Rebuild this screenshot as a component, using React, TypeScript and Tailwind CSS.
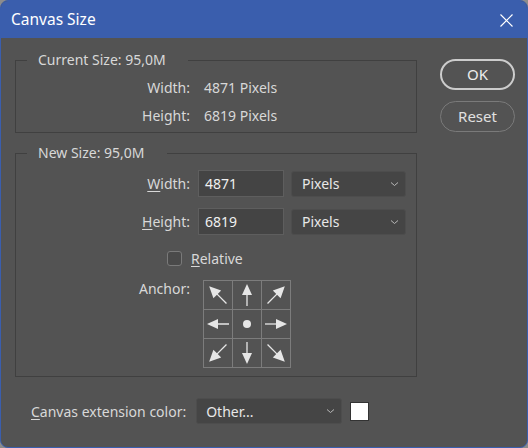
import React from "react";

const font = { fontFamily: '"Noto Sans", "Open Sans", sans-serif' };

function Chevron() {
  return (
    <svg width="9" height="6" viewBox="0 0 9 6" className="shrink-0">
      <path d="M1 1.5 L4.5 4.5 L8 1.5" fill="none" stroke="#b8b8b8" strokeWidth="1" />
    </svg>
  );
}

function Arrow({ rot }: { rot: number }) {
  const diag = rot % 90 !== 0;
  return (
    <svg width="28" height="28" viewBox="0 0 28 28">
      <g transform={`rotate(${rot} 14 14)`}>
        <line x1="14" y1={diag ? 26 : 25} x2="14" y2="11" stroke="#e6e6e6" strokeWidth="1.3" />
        <polygon points={diag ? "14,1.5 8.5,13 19.5,13" : "14,3 9,14 19,14"} fill="#e6e6e6" />
      </g>
    </svg>
  );
}

function Dot() {
  return (
    <svg width="28" height="28" viewBox="0 0 28 28">
      <circle cx="14" cy="14" r="4" fill="#e6e6e6" />
    </svg>
  );
}

export default function App() {
  const cells: (number | null)[] = [315, 0, 45, 270, null, 90, 225, 180, 135];
  return (
    <div className="w-[528px] h-[448px] bg-[#8c8c8c]" style={font}>
      <div className="w-full h-full rounded-[8px] border border-[#3a5ead] bg-[#535353] overflow-hidden flex flex-col">
        <div className="h-[37px] bg-[#3a5ead] flex items-center justify-between pl-[10px] pr-[14px] text-white text-[15.5px]">
          <span className="mt-[1px]">Canvas Size</span>
          <svg width="13" height="13" viewBox="0 0 13 13" className="mt-[1px]">
            <path d="M0.5 0.5 L12.5 12.5 M12.5 0.5 L0.5 12.5" stroke="#ffffff" strokeWidth="1.2" />
          </svg>
        </div>
        <div className="flex pl-[14px] pt-[13px] text-[14px] text-[#d8d8d8]">
          <div className="flex flex-col w-[402px]">
            <fieldset className="border border-[#404040] pt-[4px] pb-[3px]">
              <legend className="ml-[11px] pl-[11px] pr-[22px] leading-[18px]">Current Size: 95,0M</legend>
              <div className="flex items-center h-[28px]">
                <div className="w-[174px] text-right">Width:</div>
                <div className="ml-[14px]">4871 Pixels</div>
              </div>
              <div className="flex items-center h-[28px]">
                <div className="w-[174px] text-right">Height:</div>
                <div className="ml-[14px]">6819 Pixels</div>
              </div>
            </fieldset>
            <fieldset className="mt-[11px] border border-[#404040] pt-[8px] pb-[8px]">
              <legend className="ml-[11px] pl-[11px] pr-[22px] leading-[18px]">New Size: 95,0M</legend>
              <div className="flex items-center h-[27px]">
                <div className="w-[174px] text-right">
                  <u className="underline-offset-2">W</u>idth:
                </div>
                <div className="ml-[8px] w-[86px] h-[27px] border border-[#5e5e5e] bg-[#444444] flex items-center pl-[6px] text-[#f0f0f0]">4871</div>
                <div className="ml-[7px] w-[115px] h-[26px] rounded-[3px] border border-[#4d4d4d] bg-[#454545] flex items-center justify-between pl-[10px] pr-[6px] text-[#e8e8e8]">
                  <span>Pixels</span>
                  <Chevron />
                </div>
              </div>
              <div className="flex items-center h-[27px] mt-[11px]">
                <div className="w-[174px] text-right">
                  <u className="underline-offset-2">H</u>eight:
                </div>
                <div className="ml-[8px] w-[86px] h-[27px] border border-[#5e5e5e] bg-[#444444] flex items-center pl-[6px] text-[#f0f0f0]">6819</div>
                <div className="ml-[7px] w-[115px] h-[26px] rounded-[3px] border border-[#4d4d4d] bg-[#454545] flex items-center justify-between pl-[10px] pr-[6px] text-[#e8e8e8]">
                  <span>Pixels</span>
                  <Chevron />
                </div>
              </div>
              <div className="flex items-center h-[15px] mt-[16px] pl-[151px]">
                <div className="w-[15px] h-[15px] rounded-[3px] border border-[#7a7a7a] bg-[#4a4a4a]" />
                <div className="ml-[9px]">
                  <u className="underline-offset-2">R</u>elative
                </div>
              </div>
              <div className="flex items-start mt-[14px]">
                <div className="w-[174px] text-right mt-[-2px]">Anchor:</div>
                <div className="ml-[13px] grid grid-cols-3 w-[88px] h-[88px] border-t border-l border-[#7c7c7c]">
                  {cells.map((c, i) => (
                    <div key={i} className="border-r border-b border-[#7c7c7c] flex items-center justify-center">
                      {c === null ? <Dot /> : <Arrow rot={c} />}
                    </div>
                  ))}
                </div>
              </div>
            </fieldset>
            <div className="flex items-center mt-[21px] pl-[16px]">
              <div>
                <u className="underline-offset-2">C</u>anvas extension color:
              </div>
              <div className="ml-[10px] w-[146px] h-[26px] rounded-[3px] border border-[#4d4d4d] bg-[#454545] flex items-center justify-between pl-[9px] pr-[6px] text-[#e8e8e8]">
                <span>Other...</span>
                <Chevron />
              </div>
              <div className="ml-[8px] w-[19px] h-[19px] bg-white border border-[#333333]" />
            </div>
          </div>
          <div className="ml-[23px] flex flex-col mt-[8px]">
            <div className="w-[75px] h-[31px] rounded-full border-2 border-[#cccccc] flex items-center justify-center text-[15px] text-[#ececec]">OK</div>
            <div className="mt-[11px] w-[75px] h-[31px] rounded-full border border-[#7a7a7a] flex items-center justify-center text-[15px] text-[#e0e0e0]">Reset</div>
          </div>
        </div>
      </div>
    </div>
  );
}
